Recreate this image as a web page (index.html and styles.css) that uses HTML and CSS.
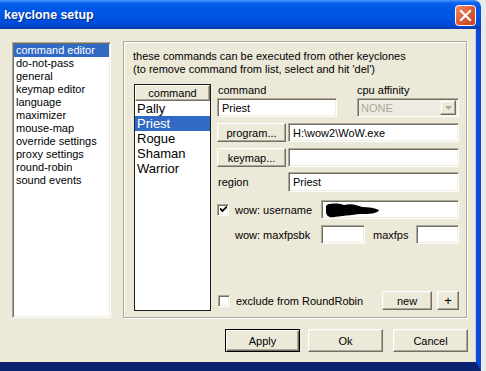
FILE: index.html
```html
<!DOCTYPE html>
<html lang="en">
<head>
  <meta charset="utf-8">
  <title>keyclone setup</title>
  <link rel="stylesheet" href="styles.css">
</head>
<body>
  <div class="window">
    <div class="titlebar">
      <span class="title">keyclone setup</span>
      <span class="close">
        <svg width="21" height="21" viewBox="0 0 21 21">
          <defs>
            <linearGradient id="cg" x1="0" y1="0" x2="1" y2="1">
              <stop offset="0" stop-color="#f0926c"/>
              <stop offset="0.45" stop-color="#e0603a"/>
              <stop offset="1" stop-color="#c23e1c"/>
            </linearGradient>
          </defs>
          <rect x="0.5" y="0.5" width="20" height="20" rx="3" fill="url(#cg)" stroke="#fff"/>
          <path d="M6 6 L15 15 M15 6 L6 15" stroke="#fff" stroke-width="2.2" stroke-linecap="square"/>
        </svg>
      </span>
    </div>

    <div class="client">
      <div class="main">
        <!-- settings pages -->
        <ul class="pages">
          <li class="selected">command editor</li>
          <li>do-not-pass</li>
          <li>general</li>
          <li>keymap editor</li>
          <li>language</li>
          <li>maximizer</li>
          <li>mouse-map</li>
          <li>override settings</li>
          <li>proxy settings</li>
          <li>round-robin</li>
          <li>sound events</li>
        </ul>

        <div class="group">
          <p class="intro">these commands can be executed from other keyclones<br>(to remove command from list, select and hit 'del')</p>

          <div class="editor">
            <div class="cmd-list">
              <div class="cmd-head">command</div>
              <ul>
                <li>Pally</li>
                <li class="selected">Priest</li>
                <li>Rogue</li>
                <li>Shaman</li>
                <li>Warrior</li>
              </ul>
            </div>

            <div class="form">
              <div class="row labels">
                <span class="lbl-command">command</span>
                <span>cpu affinity</span>
              </div>
              <div class="row">
                <div class="field name">Priest</div>
                <div class="combo">
                  <span>NONE</span>
                  <span class="drop">
                    <svg width="7" height="4" viewBox="0 0 7 4"><path d="M0 0 H7 L3.5 4 Z" fill="#aca899"/></svg>
                  </span>
                </div>
              </div>
              <div class="row">
                <button class="btn side">program...</button>
                <div class="field grow">H:\wow2\WoW.exe</div>
              </div>
              <div class="row">
                <button class="btn side">keymap...</button>
                <div class="field grow"></div>
              </div>
              <div class="row region">
                <span class="lbl-region">region</span>
                <div class="field grow">Priest</div>
              </div>
              <div class="row user">
                <span class="check-wrap"><span class="check checked">
                  <svg width="7" height="7" viewBox="0 0 7 7"><path d="M0 2.5 L2.5 5 L7 0.5" stroke="#000" stroke-width="1.8" fill="none"/></svg>
                </span></span>
                <span class="lbl-wide">wow: username</span>
                <div class="field grow">
                  <svg class="blot" width="56" height="16" viewBox="0 0 56 16">
                    <path d="M2 4 C4 1 13 1 20 3 C27 1 33 3 38 5 C45 5 51 6 55 8 C54 11 47 12 40 12 C31 12 22 14 10 15 C5 16 2 14 2 9 Z" fill="#000"/>
                  </svg>
                </div>
              </div>
              <div class="row fps">
                <span class="check-wrap"></span>
                <span class="lbl-wide">wow: maxfpsbk</span>
                <div class="field small"></div>
                <span class="lbl-fps">maxfps</span>
                <div class="field small"></div>
              </div>

              <div class="row exclude">
                <span class="check-wrap"><span class="check"></span></span>
                <span class="lbl-exclude">exclude from RoundRobin</span>
                <button class="btn new">new</button>
                <button class="btn plus">+</button>
              </div>
            </div>
          </div>
        </div>
      </div>

      <div class="actions">
        <button class="btn action default">Apply</button>
        <button class="btn action">Ok</button>
        <button class="btn action cancel">Cancel</button>
      </div>
    </div>
  </div>
</body>
</html>
```

FILE: styles.css
```css
* {
  box-sizing: border-box;
}

body {
  margin: 0;
  background: #e9e9e6;
  font-family: "Liberation Sans", Arial, sans-serif;
  font-size: 11px;
  color: #000;
}

.window {
  width: 481px;
  height: 371px;
  display: flex;
  flex-direction: column;
}

.titlebar {
  height: 29px;
  flex: none;
  display: flex;
  align-items: center;
  justify-content: space-between;
  padding: 0 5px 0 4px;
  border-radius: 0 7px 0 0;
  background: linear-gradient(#4a96fb 0, #0a61ea 3px, #0058e8 7px, #0054e3 16px, #004cd8 24px, #0343c6 27px, #0a3aa8 29px);
}

.title {
  color: #fff;
  font-weight: bold;
  font-size: 12.4px;
  text-shadow: 1px 1px #0b2d8a;
  margin-top: 1px;
}

.close {
  display: flex;
  width: 21px;
  height: 21px;
  margin-top: 1px;
}

.client {
  flex: 1;
  background: #ece9d8;
  border-right: 5px solid #0b48d8;
  border-bottom: 9px solid #0b2370;
  box-shadow: inset 0 -1px #f3ecc9, inset -1px 0 #c6cbe0;
  padding: 12px 8px 0 12px;
}

.main {
  display: flex;
  align-items: flex-start;
  gap: 12px;
}

/* left page list */
.pages {
  list-style: none;
  margin: 1px 0 0 0;
  padding: 1px;
  width: 99px;
  height: 276px;
  background: #fff;
  border: 1px solid;
  border-color: #aca899 #fff #fff #aca899;
  box-shadow: inset 1px 1px #716f64, inset -1px -1px #f1efe2;
}

.pages li {
  height: 13px;
  line-height: 12px;
  padding-left: 2px;
  white-space: nowrap;
}

.pages li.selected,
.cmd-list li.selected {
  background: #316ac5;
  color: #fff;
}

/* group box */
.group {
  width: 344px;
  height: 277px;
  border: 1px solid #aca899;
  box-shadow: inset 1px 1px #fff, 1px 1px #fff;
  padding: 8px 6px 6px 9px;
  display: flex;
  flex-direction: column;
}

.intro {
  margin: 0;
  line-height: 13px;
  white-space: nowrap;
}

.editor {
  display: flex;
  margin-top: 8px;
  gap: 6px;
}

.cmd-list {
  margin-left: 1px;
  width: 77px;
  height: 227px;
  background: #fff;
  border: 1px solid #1c1c1c;
}

.cmd-head {
  height: 16px;
  line-height: 14px;
  text-align: center;
  background: #ece9d8;
  border: 1px solid;
  border-color: #fff #716f64 #716f64 #fff;
  box-shadow: inset -1px -1px #aca899;
}

.cmd-list ul {
  list-style: none;
  margin: 0;
  padding: 0;
}

.cmd-list li {
  height: 15px;
  line-height: 15px;
  font-size: 13px;
  padding-left: 2px;
}

/* form */
.form {
  width: 243px;
  height: 227px;
  display: flex;
  flex-direction: column;
}

.row {
  display: flex;
  align-items: center;
  height: 19px;
  margin-top: 6px;
  padding-right: 1px;
}

.row.labels {
  height: 14px;
  margin-top: 0;
  align-items: flex-start;
  line-height: 12px;
}

.row:nth-child(2) {
  margin-top: 0;
}

.row.region {
  height: 20px;
  margin-top: 5px;
}

.row.user {
  margin-top: 8px;
}

.lbl-command {
  width: 140px;
  padding-left: 1px;
}

.field {
  height: 100%;
  background: #fff;
  border: 1px solid;
  border-color: #aca899 #fff #fff #aca899;
  box-shadow: inset 1px 1px #716f64, inset -1px -1px #f1efe2;
  padding: 0 4px;
  display: flex;
  align-items: center;
  white-space: nowrap;
}

.field.name {
  width: 120px;
  margin-right: 20px;
}

.field.grow {
  flex: 1;
}

.field.small {
  width: 44px;
}

.region .field {
  align-items: flex-start;
  padding-top: 3px;
}

.combo {
  flex: 1;
  height: 100%;
  display: flex;
  align-items: center;
  justify-content: space-between;
  border: 1px solid;
  border-color: #aca899 #fff #fff #aca899;
  box-shadow: inset 1px 1px #716f64, inset -1px -1px #f1efe2;
  background: #eeece2;
  color: #aca899;
  padding: 2px 2px 2px 3px;
}

.drop {
  width: 16px;
  height: 15px;
  display: flex;
  align-items: center;
  justify-content: center;
  background: #ece9d8;
  border: 1px solid;
  border-color: #f1efe2 #716f64 #716f64 #f1efe2;
  box-shadow: inset -1px -1px #aca899, inset 1px 1px #fff;
}

/* classic buttons */
.btn {
  font-family: "Liberation Sans", Arial, sans-serif;
  font-size: 11px;
  color: #000;
  background: #ece9d8;
  border: 1px solid;
  border-color: #fff #716f64 #716f64 #fff;
  box-shadow: inset -1px -1px #aca899, inset 1px 1px #f1efe2;
  padding: 0;
  height: 100%;
}

.btn.side {
  width: 69px;
  margin-right: 2px;
}

.lbl-region {
  width: 71px;
  padding-left: 1px;
}

.check-wrap {
  width: 18px;
  display: flex;
}

.check {
  width: 12px;
  height: 12px;
  background: #fff;
  border: 1px solid;
  border-color: #aca899 #fff #fff #aca899;
  box-shadow: inset 1px 1px #716f64, inset -1px -1px #f1efe2;
  display: flex;
  align-items: center;
  justify-content: center;
}

.lbl-wide {
  width: 86px;
}

.lbl-fps {
  width: 51px;
  padding-left: 8px;
}

.row.fps .field.small:last-child {
  width: 43px;
}

.blot {
  margin-left: -2px;
  margin-top: 1px;
}

.row.exclude {
  margin-top: auto;
  margin-bottom: 1px;
  padding-right: 0;
}

.row.exclude .check-wrap {
  padding-left: 1px;
  width: 19px;
}

.lbl-exclude {
  width: 146px;
}

.btn.new {
  width: 50px;
  margin-right: 5px;
}

.btn.plus {
  width: 22px;
  font-size: 13px;
}

/* bottom buttons */
.actions {
  display: flex;
  justify-content: flex-end;
  margin-top: 11px;
}

.btn.action {
  width: 75px;
  height: 23px;
  margin-left: 8px;
}

.btn.action.cancel {
  margin-left: 10px;
}

.btn.action.default {
  border: 1px solid #000;
  box-shadow: inset 1px 1px #fff, inset -1px -1px #716f64, inset -2px -2px #aca899;
}
```
